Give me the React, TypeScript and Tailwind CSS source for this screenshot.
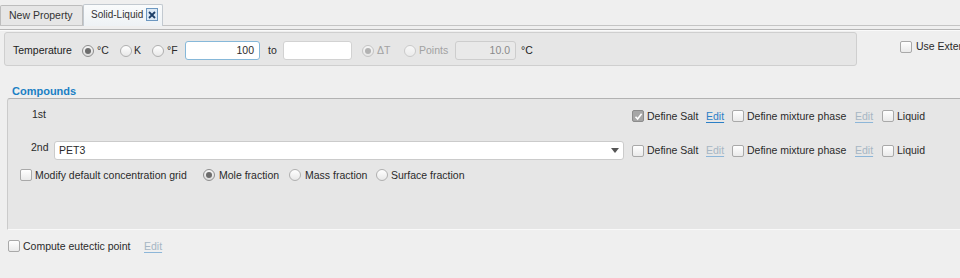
import React from "react";

const Check = ({ checked = false }: { checked?: boolean }) =>
  checked ? (
    <span className="inline-flex items-center justify-center w-[12px] h-[12px] shrink-0 rounded-[2px] border border-[#8c8c8c] bg-[#a6a6a6]">
      <svg width="9" height="9" viewBox="0 0 9 9">
        <path d="M1.5 4.8 L3.6 7 L7.6 1.8" fill="none" stroke="#ffffff" strokeWidth="1.6" />
      </svg>
    </span>
  ) : (
    <span className="inline-block w-[12px] h-[12px] shrink-0 rounded-[2px] border border-[#a9a9a9] bg-gradient-to-b from-[#ffffff] to-[#eaeaea]" />
  );

const Radio = ({ on = false, disabled = false }: { on?: boolean; disabled?: boolean }) => {
  if (on && !disabled)
    return (
      <span className="inline-flex items-center justify-center w-[12px] h-[12px] shrink-0 rounded-full border border-[#8e8e8e] bg-gradient-to-b from-[#f6f6f6] to-[#dcdcdc]">
        <span className="w-[6px] h-[6px] rounded-full bg-[#6c6c6c]" />
      </span>
    );
  if (on && disabled)
    return (
      <span className="inline-flex items-center justify-center w-[12px] h-[12px] shrink-0 rounded-full border border-[#c4c4c4] bg-gradient-to-b from-[#f6f6f6] to-[#e6e6e6]">
        <span className="w-[6px] h-[6px] rounded-full bg-[#b2b2b2]" />
      </span>
    );
  if (disabled)
    return (
      <span className="inline-block w-[12px] h-[12px] shrink-0 rounded-full border border-[#cacaca] bg-gradient-to-b from-[#f8f8f8] to-[#ebebeb]" />
    );
  return (
    <span className="inline-block w-[12px] h-[12px] shrink-0 rounded-full border border-[#b0b0b0] bg-gradient-to-b from-[#ffffff] to-[#e8e8e8]" />
  );
};

const EditOn = () => (
  <span className="text-[#2b7fc6] underline decoration-[#2b7fc6] underline-offset-[2px]">Edit</span>
);
const EditOff = () => (
  <span className="text-[#a6b6c4] underline decoration-[#8db6d8] underline-offset-[2px]">Edit</span>
);

const RightGroup = ({ salt, saltEdit }: { salt: boolean; saltEdit: boolean }) => (
  <div className="flex items-center shrink-0 whitespace-nowrap">
    <Check checked={salt} />
    <span className="ml-[3px] w-[59px] shrink-0">Define Salt</span>
    <span className="w-[26px] shrink-0">{saltEdit ? <EditOn /> : <EditOff />}</span>
    <Check />
    <span className="ml-[3px] w-[108px] shrink-0">Define mixture phase</span>
    <span className="w-[27px] shrink-0">
      <EditOff />
    </span>
    <Check />
    <span className="ml-[3px]">Liquid</span>
  </div>
);

export default function App() {
  return (
    <div
      className="w-[960px] h-[278px] overflow-hidden bg-[#efefef] text-[10.5px] leading-[13px] text-[#2a2a2a] whitespace-nowrap"
      style={{ fontFamily: '"Liberation Sans", Arial, sans-serif' }}
    >
      {/* Tab bar */}
      <div className="h-[26px] flex items-end border-b border-[#c4c4c4]">
        <div className="h-[20px] w-[83px] shrink-0 flex items-center pl-[8px] border border-b-0 border-[#bdbdbd] bg-[#e6e6e6] rounded-t-[2px] text-[#333]">
          New Property
        </div>
        <div className="-mb-px h-[22px] w-[80px] shrink-0 flex items-start pt-[3px] pl-[7px] border border-b-0 border-[#c2c9d0] bg-gradient-to-b from-[#f9fbfc] to-[#eef2f5] rounded-t-[2px] text-[#333]">
          <span className="w-[55px] shrink-0 text-[10px]">Solid-Liquid</span>
          <span className="w-[12px] h-[13px] shrink-0 flex items-center justify-center border border-[#6c97c0] bg-[#dce9f5]">
            <svg width="8" height="8" viewBox="0 0 8 8">
              <path d="M1 1 L7 7 M7 1 L1 7" stroke="#1d3f68" strokeWidth="1.8" />
            </svg>
          </span>
        </div>
      </div>
      <div className="mt-[3px] h-px bg-[#b6b6b6]" />
      <div className="h-px bg-[#fafafa]" />

      {/* Temperature row */}
      <div className="mt-[1px] flex items-start">
        <div className="ml-[4px] w-[853px] shrink-0 h-[34px] pt-[3px] pl-[8px] flex items-center border border-[#cfcfcf] rounded-[3px] bg-[#e6e6e6]">
          <span className="w-[69px] shrink-0 text-[#222]">Temperature</span>
          <Radio on />
          <span className="ml-[3px] w-[23px] shrink-0">°C</span>
          <Radio />
          <span className="ml-[2px] w-[18px] shrink-0">K</span>
          <Radio />
          <span className="ml-[3px] w-[18px] shrink-0">°F</span>
          <div className="w-[75px] shrink-0 h-[19px] flex items-center justify-end pr-[5px] bg-white border border-[#86b8d9] rounded-[3px]">
            100
          </div>
          <span className="w-[23px] shrink-0 pl-[8px]">to</span>
          <div className="w-[69px] shrink-0 h-[19px] bg-white border border-[#d2d2d2] rounded-[3px]" />
          <span className="w-[10px] shrink-0" />
          <Radio on disabled />
          <span className="ml-[3px] w-[27px] shrink-0 text-[#a2a2a2]">ΔT</span>
          <Radio disabled />
          <span className="ml-[3px] w-[36px] shrink-0 text-[#a2a2a2]">Points</span>
          <div className="w-[61px] shrink-0 h-[19px] flex items-center justify-end pr-[5px] bg-[#e9e9e9] border border-[#cdcdcd] rounded-[3px] text-[#8a8a8a]">
            10.0
          </div>
          <span className="ml-[5px] text-[#1e1e1e]">°C</span>
        </div>
        <div className="ml-[43px] mt-[8px] flex items-center shrink-0">
          <Check />
          <span className="ml-[4px]">Use External</span>
        </div>
      </div>

      {/* Compounds heading */}
      <div className="mt-[18px] h-[14px] leading-[14px] pl-[12px] text-[11px] font-bold text-[#1b80c4]">Compounds</div>

      {/* Compounds panel */}
      <div className="ml-[7px] w-[960px] h-[132px] border-t border-l border-b border-t-[#b2b2b2] border-l-[#cbcbcb] border-b-[#f9f9f9] rounded-tl-[3px] bg-[#e6e6e6]">
        <div className="mt-[7px] h-[20px] flex items-center">
          <div className="w-[624px] shrink-0 pl-[24px]">
            <span className="inline-block mb-[4px]">1st</span>
          </div>
          <RightGroup salt saltEdit />
        </div>
        <div className="mt-[15px] h-[19px] flex items-center">
          <span className="ml-[23px] w-[23px] shrink-0 mb-[7px]">2nd</span>
          <div className="w-[570px] shrink-0 h-[19px] flex items-center justify-between pl-[4px] pr-[4px] bg-white border border-[#cbcbcb] rounded-[3px]">
            <span>PET3</span>
            <svg width="8" height="5" viewBox="0 0 8 5">
              <path d="M0 0 L8 0 L4 5 Z" fill="#555" />
            </svg>
          </div>
          <span className="w-[8px] shrink-0" />
          <RightGroup salt={false} saltEdit={false} />
        </div>
        <div className="mt-[8px] h-[14px] flex items-center pl-[12px]">
          <Check />
          <span className="ml-[3px] w-[168px] shrink-0">Modify default concentration grid</span>
          <Radio on />
          <span className="ml-[4px] w-[70px] shrink-0">Mole fraction</span>
          <Radio />
          <span className="ml-[4px] w-[71px] shrink-0">Mass fraction</span>
          <Radio />
          <span className="ml-[3px]">Surface fraction</span>
        </div>
      </div>

      {/* Bottom */}
      <div className="mt-[8px] h-[16px] flex items-center pl-[8px]">
        <Check />
        <span className="ml-[3px] w-[121px] shrink-0">Compute eutectic point</span>
        <EditOff />
      </div>
    </div>
  );
}
